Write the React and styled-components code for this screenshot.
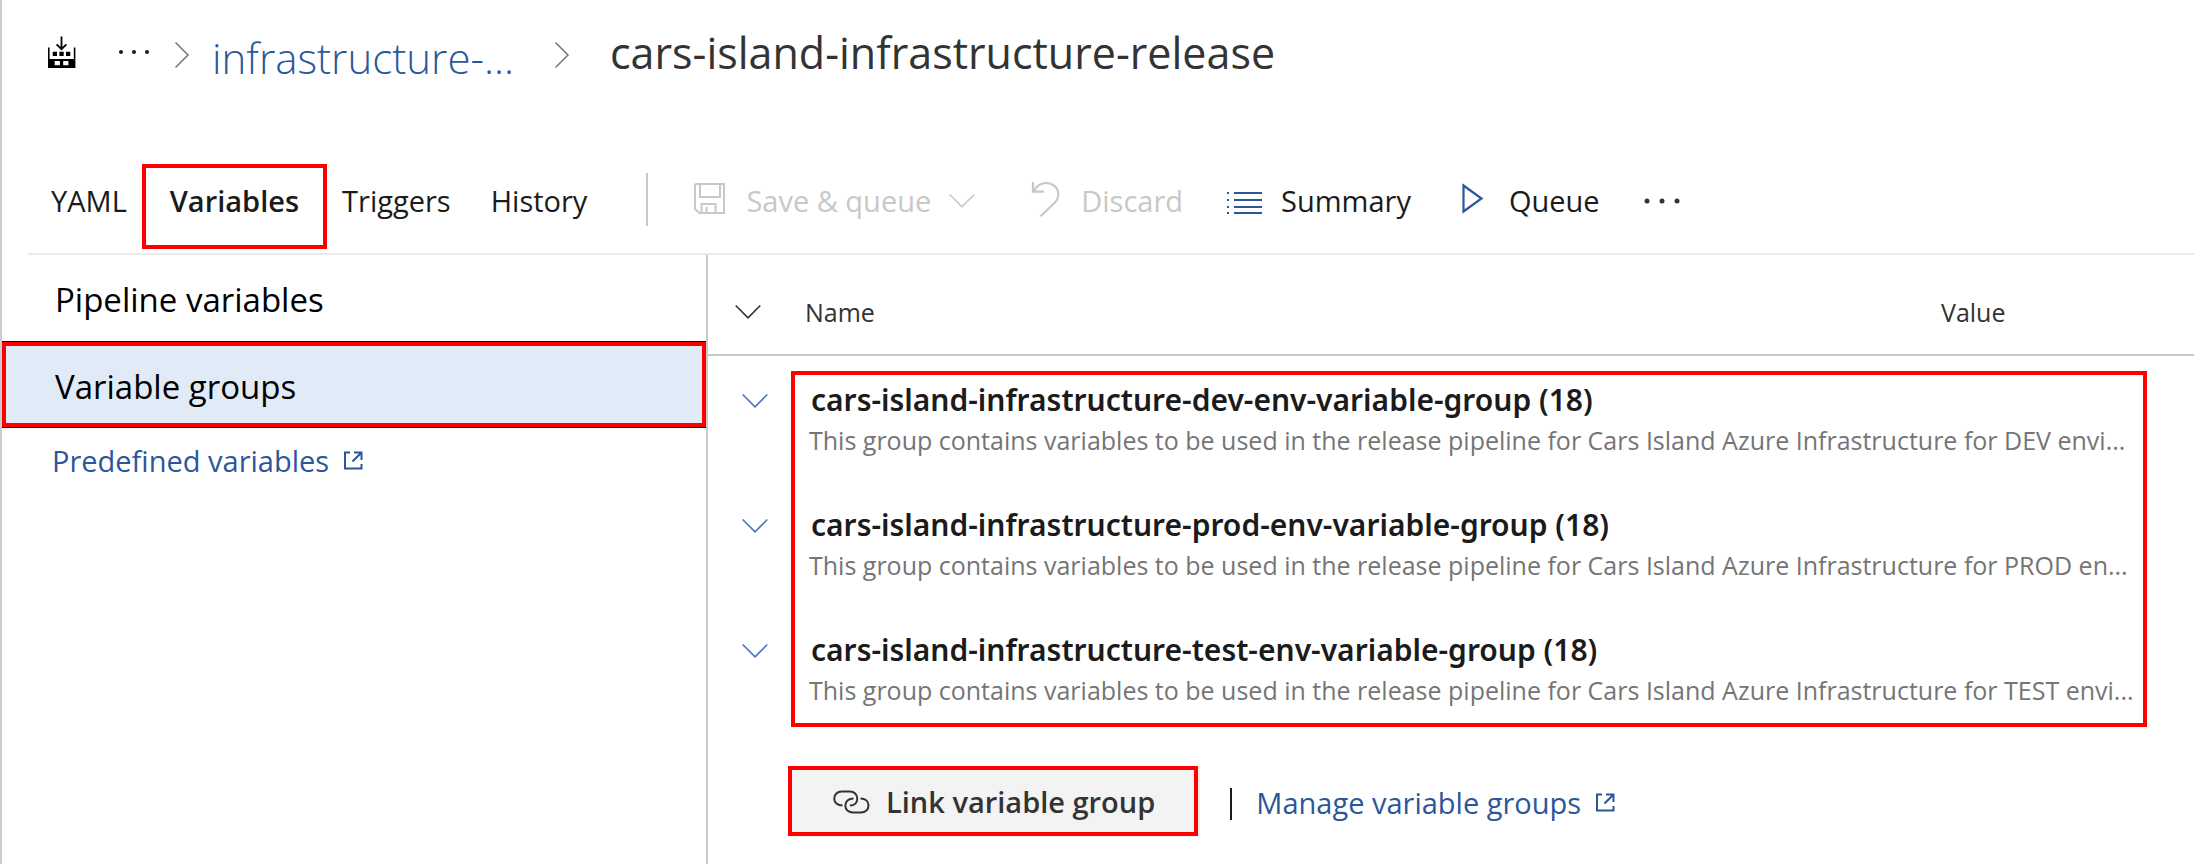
import React from 'react';
import styled, { createGlobalStyle, css } from 'styled-components';

const GlobalStyle = createGlobalStyle`
  *, *::before, *::after { box-sizing: border-box; }
  body {
    margin: 0;
    background: #fff;
    color: #1b1b1b;
    font-family: "Open Sans", "Noto Sans", sans-serif;
    font-size: 29px;
    line-height: 40px;
  }
  button { font: inherit; color: inherit; background: none; border: 0; padding: 0; margin: 0; cursor: pointer; }
  a { text-decoration: none; color: inherit; }
  svg { display: block; flex: none; }
`;

const RED = '#ff0000';
const BLUE = '#2b579a';

const Page = styled.div`
  min-height: 100vh;
  display: flex;
  flex-direction: column;
  border-left: 2px solid #cdcdcd;
`;

const Header = styled.header`
  display: flex;
  align-items: center;
  gap: 22px;
  height: 64px;
  margin: 20px 0 80px;
  padding-left: 44px;
`;

const RootLink = styled.a`
  margin-right: 16px;
`;

const Crumb = styled.a`
  margin-right: 18px;
  padding-top: 12px;
  color: ${BLUE};
  font-size: 42px;
  font-weight: 300;
  white-space: nowrap;
`;

const Title = styled.h1`
  margin: 0 0 0 18px;
  padding-top: 2px;
  font-size: 43px;
  font-weight: 400;
  color: #333;
  white-space: nowrap;
`;

const Toolbar = styled.div`
  display: flex;
  align-items: flex-start;
  margin-left: 26px;
  padding: 0 0 4px 3px;
  border-bottom: 2px solid #eaeaea;
`;

const Tabs = styled.nav`
  display: flex;
`;

const Tab = styled.a`
  height: 85px;
  padding: 17px 20px 0;
  color: #1b1b1b;
  white-space: nowrap;
  ${(p) => p.$selected && css`
    margin: 0 -5px;
    padding: 13px 24px 0;
    border: 4px solid ${RED};
    font-weight: 600;
  `}
`;

const Separator = styled.div`
  width: 2px;
  height: 53px;
  margin: 9px 44px 0 39px;
  background: #c8c8c8;
`;

const Commands = styled.div`
  display: flex;
  gap: 44px;
  padding-top: 17px;
`;

const Command = styled.button`
  display: flex;
  align-items: center;
  gap: 18px;
  height: 40px;
  color: #1b1b1b;
  white-space: nowrap;
  &:disabled { color: #c8c8c8; cursor: default; }
`;

const Body = styled.div`
  flex: 1;
  display: flex;
`;

const Sidebar = styled.nav`
  flex: 0 0 706px;
  border-right: 2px solid #c8c8c8;
`;

const SideItem = styled.a`
  display: block;
  height: 87px;
  padding: 25px 0 0 53px;
  font-size: 33px;
  color: #000;
  ${(p) => p.$selected && css`
    height: 85px;
    padding: 21px 0 0 49px;
    border: 4px solid ${RED};
    background: #e1ebf7;
    box-shadow: 0 -1px 0 #000, 0 1px 0 #000;
  `}
`;

const ExternalLink = styled.a`
  display: flex;
  align-items: center;
  gap: 15px;
  color: ${BLUE};
  white-space: nowrap;
`;

const SideLink = styled(ExternalLink)`
  margin: 14px 0 0 50px;
`;

const Main = styled.main`
  flex: 1;
  min-width: 0;
`;

const Table = styled.table`
  width: 100%;
  table-layout: fixed;
  border-collapse: separate;
  border-spacing: 0;
  tbody::before { content: ""; display: block; height: 15px; }
`;

const Col = styled.col`
  width: ${(p) => (p.$width ? `${p.$width}px` : 'auto')};
`;

const HeadCell = styled.th`
  height: 101px;
  padding: 15px 0 0 ${(p) => p.$indent}px;
  border-bottom: 2px solid #c8c8c8;
  font-size: 25px;
  font-weight: 400;
  color: #333;
  text-align: left;
`;

const ToggleCell = styled.td`
  padding: 22px 0 0 34px;
  vertical-align: top;
  color: #4a72c0;
`;

const Toggle = styled.button`
  display: block;
`;

const edges = {
  first: `inset 4px 0 ${RED}, inset -4px 0 ${RED}, inset 0 4px ${RED}`,
  middle: `inset 4px 0 ${RED}, inset -4px 0 ${RED}`,
  last: `inset 4px 0 ${RED}, inset -4px 0 ${RED}, inset 0 -4px ${RED}`,
};

const GroupCell = styled.td`
  height: ${(p) => (p.$edge === 'last' ? 106 : 125)}px;
  padding: 9px 14px 0 18px;
  vertical-align: top;
  box-shadow: ${(p) => edges[p.$edge]};
`;

const GroupName = styled.div`
  padding-left: 2px;
  font-family: "Noto Sans", "Open Sans", sans-serif;
  font-size: 30px;
  font-weight: 650;
  color: #1b1b1b;
  white-space: nowrap;
`;

const GroupText = styled.div`
  font-size: 25px;
  color: #757575;
  white-space: nowrap;
`;

const Footer = styled.div`
  display: flex;
  align-items: center;
  padding: 39px 0 28px 80px;
`;

const LinkButton = styled.button`
  display: flex;
  align-items: center;
  gap: 16px;
  height: 70px;
  padding: 2px 39px 0 41px;
  border: 4px solid ${RED};
  background: #f3f3f3;
  box-shadow: 2px 1px 0 #f0f0f0;
  color: #333;
  font-weight: 600;
  white-space: nowrap;
`;

const Divider = styled.div`
  width: 2px;
  height: 32px;
  margin: 6px 24px 0 32px;
  background: #1b1b1b;
`;

const ManageLink = styled(ExternalLink)`
  padding-top: 4px;
`;

const FactoryIcon = () => (
  <svg width="32" height="32" viewBox="0 0 32 32" aria-hidden="true">
    <path d="M2 11.5h1.6V23h24.2V11.5h1.6V32H2z" fill="#000" />
    <path d="M8.7 25h5.2v4.3H8.7zM17.2 25h5.2v4.3h-5.2z" fill="#fff" />
    <path d="M6.7 15.7H11V20H6.7zM13.4 15.7h4.3V20h-4.3zM20 15.7h4.3V20H20z" fill="#000" />
    <path d="M15.5.5v12.6M10.6 8.4l4.9 4.8 4.9-4.8" fill="none" stroke="#000" strokeWidth="1.8" />
  </svg>
);

const DotsIcon = ({ gap = 13, r = 2, color = '#1b1b1b' }) => (
  <svg width="36" height="6" viewBox="0 0 36 6" aria-hidden="true">
    {[-1, 0, 1].map((n) => <circle key={n} cx={18 + n * gap} cy="3" r={r} fill={color} />)}
  </svg>
);

const CrumbChevron = () => (
  <svg width="16" height="34" viewBox="0 0 16 34" aria-hidden="true">
    <path d="M1.5 7.5L14 20 1.5 32.5" fill="none" stroke="#767676" strokeWidth="1.5" />
  </svg>
);

const ChevronDown = ({ width = 26 }) => (
  <svg width={width} height="16" viewBox={`0 0 ${width} 16`} aria-hidden="true">
    <path d="M.7 1.5L13 13.8 25.3 1.5" fill="none" stroke="currentColor" strokeWidth="1.6" />
  </svg>
);

const SaveIcon = () => (
  <svg width="36" height="40" viewBox="0 0 36 40" fill="none" stroke="currentColor" strokeWidth="2" aria-hidden="true">
    <path d="M4 3h28v29H7.5L3 28V4z" />
    <path d="M8 3v13h20V3M9.5 32V23h14v9M14.5 26v6" />
  </svg>
);

const UndoIcon = () => (
  <svg width="36" height="40" viewBox="0 0 36 40" fill="none" stroke="currentColor" strokeWidth="2.2" aria-hidden="true">
    <path d="M6 1v9.6h11M6.6 10.2C9.5 5 13.5 2 19 2c7 0 12.3 4.5 12.3 11.5 0 4-1.8 6.5-4.3 9L13.5 35.2" />
  </svg>
);

const ListIcon = () => (
  <svg width="36" height="40" viewBox="0 0 36 40" aria-hidden="true">
    {[11, 18, 25, 31].map((y) => (
      <path key={y} d={`M0 ${y}h2v2H0zM7 ${y}h28v2H7z`} fill={BLUE} />
    ))}
  </svg>
);

const PlayIcon = () => (
  <svg width="36" height="40" viewBox="0 0 36 40" aria-hidden="true">
    <path d="M8.5 4.5L26.5 17.5 8.5 30.5z" fill="none" stroke={BLUE} strokeWidth="2.2" />
  </svg>
);

const ChainIcon = () => (
  <svg width="37" height="24" viewBox="0 0 37 24" fill="none" stroke="#333" strokeWidth="2" aria-hidden="true">
    <path d="M9.5 15.5C4.5 15.5 1.2 12.5 1.2 8.5S4.5 1.5 8.5 1.5H17C21 1.5 24.3 4.5 24.3 8.5S21.5 15.5 17 15.5" />
    <path d="M20.5 8.5C15.5 8.5 12.3 11.5 12.3 15.5S15.5 22.5 20 22.5H28C32.5 22.5 35.5 19.5 35.5 15.5S32.5 8.5 27.5 8.5" />
  </svg>
);

const ExternalIcon = () => (
  <svg width="19" height="20" viewBox="0 0 19 20" fill="none" stroke="currentColor" strokeWidth="2" aria-hidden="true">
    <path d="M6 1.5H1v16h16.5V13M10 1.5h7.5V9M17.5 1.5L8.5 10.5" />
  </svg>
);

const groups = [
  { env: 'dev', edge: 'first', target: 'DEV envi...' },
  { env: 'prod', edge: 'middle', target: 'PROD en...' },
  { env: 'test', edge: 'last', target: 'TEST envi...' },
];

export default function App() {
  return (
    <>
      <GlobalStyle />
      <Page>
        <Header>
          <RootLink href="#pipelines" aria-label="Pipelines"><FactoryIcon /></RootLink>
          <button type="button" aria-label="More levels"><DotsIcon /></button>
          <CrumbChevron />
          <Crumb href="#folder">infrastructure-...</Crumb>
          <CrumbChevron />
          <Title>cars-island-infrastructure-release</Title>
        </Header>

        <Toolbar>
          <Tabs>
            <Tab href="#yaml">YAML</Tab>
            <Tab href="#variables" $selected aria-current="page">Variables</Tab>
            <Tab href="#triggers">Triggers</Tab>
            <Tab href="#history">History</Tab>
          </Tabs>
          <Separator />
          <Commands>
            <Command type="button" disabled>
              <SaveIcon />Save &amp; queue<ChevronDown width={34} />
            </Command>
            <Command type="button" disabled><UndoIcon />Discard</Command>
            <Command type="button"><ListIcon />Summary</Command>
            <Command type="button"><PlayIcon />Queue</Command>
            <Command type="button" aria-label="More actions"><DotsIcon gap={15} r={2.5} color="#333" /></Command>
          </Commands>
        </Toolbar>

        <Body>
          <Sidebar>
            <SideItem href="#pipeline-variables">Pipeline variables</SideItem>
            <SideItem href="#variable-groups" $selected aria-current="page">Variable groups</SideItem>
            <SideLink href="#predefined">Predefined variables<ExternalIcon /></SideLink>
          </Sidebar>

          <Main>
            <Table>
              <colgroup>
                <Col $width={83} />
                <Col />
                <Col $width={206} />
                <Col $width={47} />
              </colgroup>
              <thead>
                <tr>
                  <HeadCell $indent={27}>
                    <Toggle type="button" aria-label="Toggle all groups"><ChevronDown /></Toggle>
                  </HeadCell>
                  <HeadCell $indent={14}>Name</HeadCell>
                  <HeadCell $indent={0}>Value</HeadCell>
                  <HeadCell $indent={0} as="td" />
                </tr>
              </thead>
              <tbody>
                {groups.map(({ env, edge, target }) => (
                  <tr key={env}>
                    <ToggleCell>
                      <Toggle type="button" aria-label={`Toggle ${env} group`}><ChevronDown /></Toggle>
                    </ToggleCell>
                    <GroupCell colSpan={2} $edge={edge}>
                      <GroupName>{`cars-island-infrastructure-${env}-env-variable-group (18)`}</GroupName>
                      <GroupText>
                        {`This group contains variables to be used in the release pipeline for Cars Island Azure Infrastructure for ${target}`}
                      </GroupText>
                    </GroupCell>
                    <td />
                  </tr>
                ))}
              </tbody>
            </Table>

            <Footer>
              <LinkButton type="button"><ChainIcon />Link variable group</LinkButton>
              <Divider />
              <ManageLink href="#manage">Manage variable groups<ExternalIcon /></ManageLink>
            </Footer>
          </Main>
        </Body>
      </Page>
    </>
  );
}
